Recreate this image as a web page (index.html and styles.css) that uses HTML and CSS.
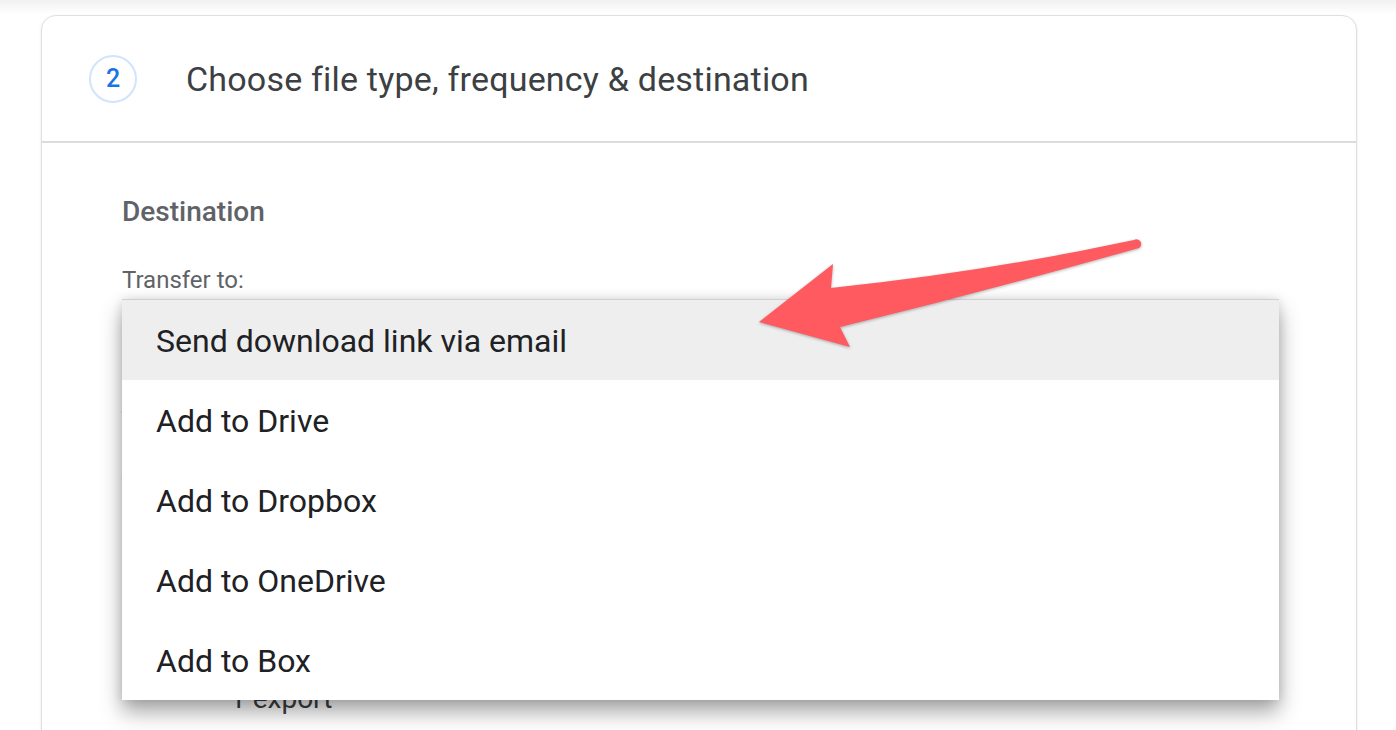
FILE: index.html
```html
<!DOCTYPE html>
<html>
<head>
  <title>Export settings</title>
  <link rel="stylesheet" href="styles.css">
</head>
<body>
  <div class="top-shade"></div>
  <div class="page">
    <section class="card">
      <div class="card-head">
        <span class="step">2</span>
        <h2 class="card-title">Choose file type, frequency &amp; destination</h2>
      </div>
      <div class="card-body">
        <h3 class="section-title">Destination</h3>
        <div class="field-label">Transfer to:</div>
        <div class="select-wrap">
          <div class="select"></div>
          <ul class="menu">
            <li class="menu-item active">Send download link via email</li>
            <li class="menu-item">Add to Drive</li>
            <li class="menu-item">Add to Dropbox</li>
            <li class="menu-item">Add to OneDrive</li>
            <li class="menu-item">Add to Box</li>
          </ul>
        </div>
        <p class="hint">We'll email you a download link</p>
        <p class="hint">c</p>
        <div class="option">
          <span class="option-text">1 export</span>
        </div>
      </div>
    </section>

    <!-- annotation arrow -->
    <svg class="arrow" width="1396" height="730" viewBox="0 0 1396 730">
      <path d="M759 322 L833 264 L831 288 Q 985 272 1134 240 A 4.2 4.2 0 0 1 1139 248 Q 990 290 840 327 L850 347 Z" fill="#fe5a5f"/>
    </svg>
  </div>
</body>
</html>
```

FILE: styles.css
```css
html, body {
  margin: 0;
  height: 730px;
  overflow: hidden;
  background: #fff;
  font-family: Roboto, "Open Sans", sans-serif;
}

.top-shade {
  height: 14px;
  background: linear-gradient(#f1f1f1, #ffffff);
}

.page {
  position: relative;
  padding-left: 41px;
  margin-top: 1px;
}

.card {
  width: 1314px;
  height: 900px;
  border: 1px solid #e0e0e0;
  border-radius: 15px 15px 0 0;
  background: #fff;
  box-shadow: 0 1px 3px rgba(0, 0, 0, 0.1);
}

.card-head {
  display: flex;
  align-items: center;
  height: 127px;
  padding-left: 47px;
  border-bottom: 2px solid #dadce0;
  box-sizing: border-box;
}

.step {
  display: flex;
  justify-content: center;
  align-items: center;
  width: 44px;
  height: 44px;
  border: 2px solid #d2e3fc;
  border-radius: 50%;
  color: #1a73e8;
  font-size: 25px;
  font-weight: 500;
}

.card-title {
  margin: 0 0 0 49px;
  font-size: 34px;
  letter-spacing: 0.2px;
  font-weight: 400;
  color: #3c4043;
}

.card-body {
  padding: 52px 77px 0 80px;
}

.section-title {
  margin: 0;
  font-size: 28px;
  line-height: 34px;
  font-weight: 500;
  color: #5f6368;
}

.field-label {
  margin-top: 36px;
  font-size: 24px;
  line-height: 30px;
  color: #5f6368;
}

.select-wrap {
  position: relative;
  margin-top: 4px;
}

.select {
  height: 80px;
  border: 1px solid #dadce0;
  box-sizing: border-box;
}

.menu {
  position: absolute;
  top: 0;
  left: 0;
  right: 0;
  margin: 0;
  padding: 0;
  list-style: none;
  background: #fff;
  border-top: 1px solid #cfcfd4;
  box-shadow: 0 12px 20px rgba(0, 0, 0, 0.35), 0 0 10px rgba(0, 0, 0, 0.12);
  z-index: 2;
}

.menu-item {
  height: 80px;
  line-height: 82px;
  padding-left: 34px;
  font-size: 32px;
  color: #202124;
}

.menu-item.active {
  background: #eeeeee;
}

.hint {
  margin: 26px 0 0 -1px;
  font-size: 24px;
  line-height: 30px;
  color: #5f6368;
}

.option {
  margin-top: 191px;
  padding-left: 108px;
  font-size: 28px;
  line-height: 34px;
  color: #3c4043;
}

.arrow {
  position: absolute;
  top: -15px;
  left: 0;
  z-index: 3;
  filter: drop-shadow(0 1px 1.5px rgba(0, 0, 0, 0.3));
}
```
